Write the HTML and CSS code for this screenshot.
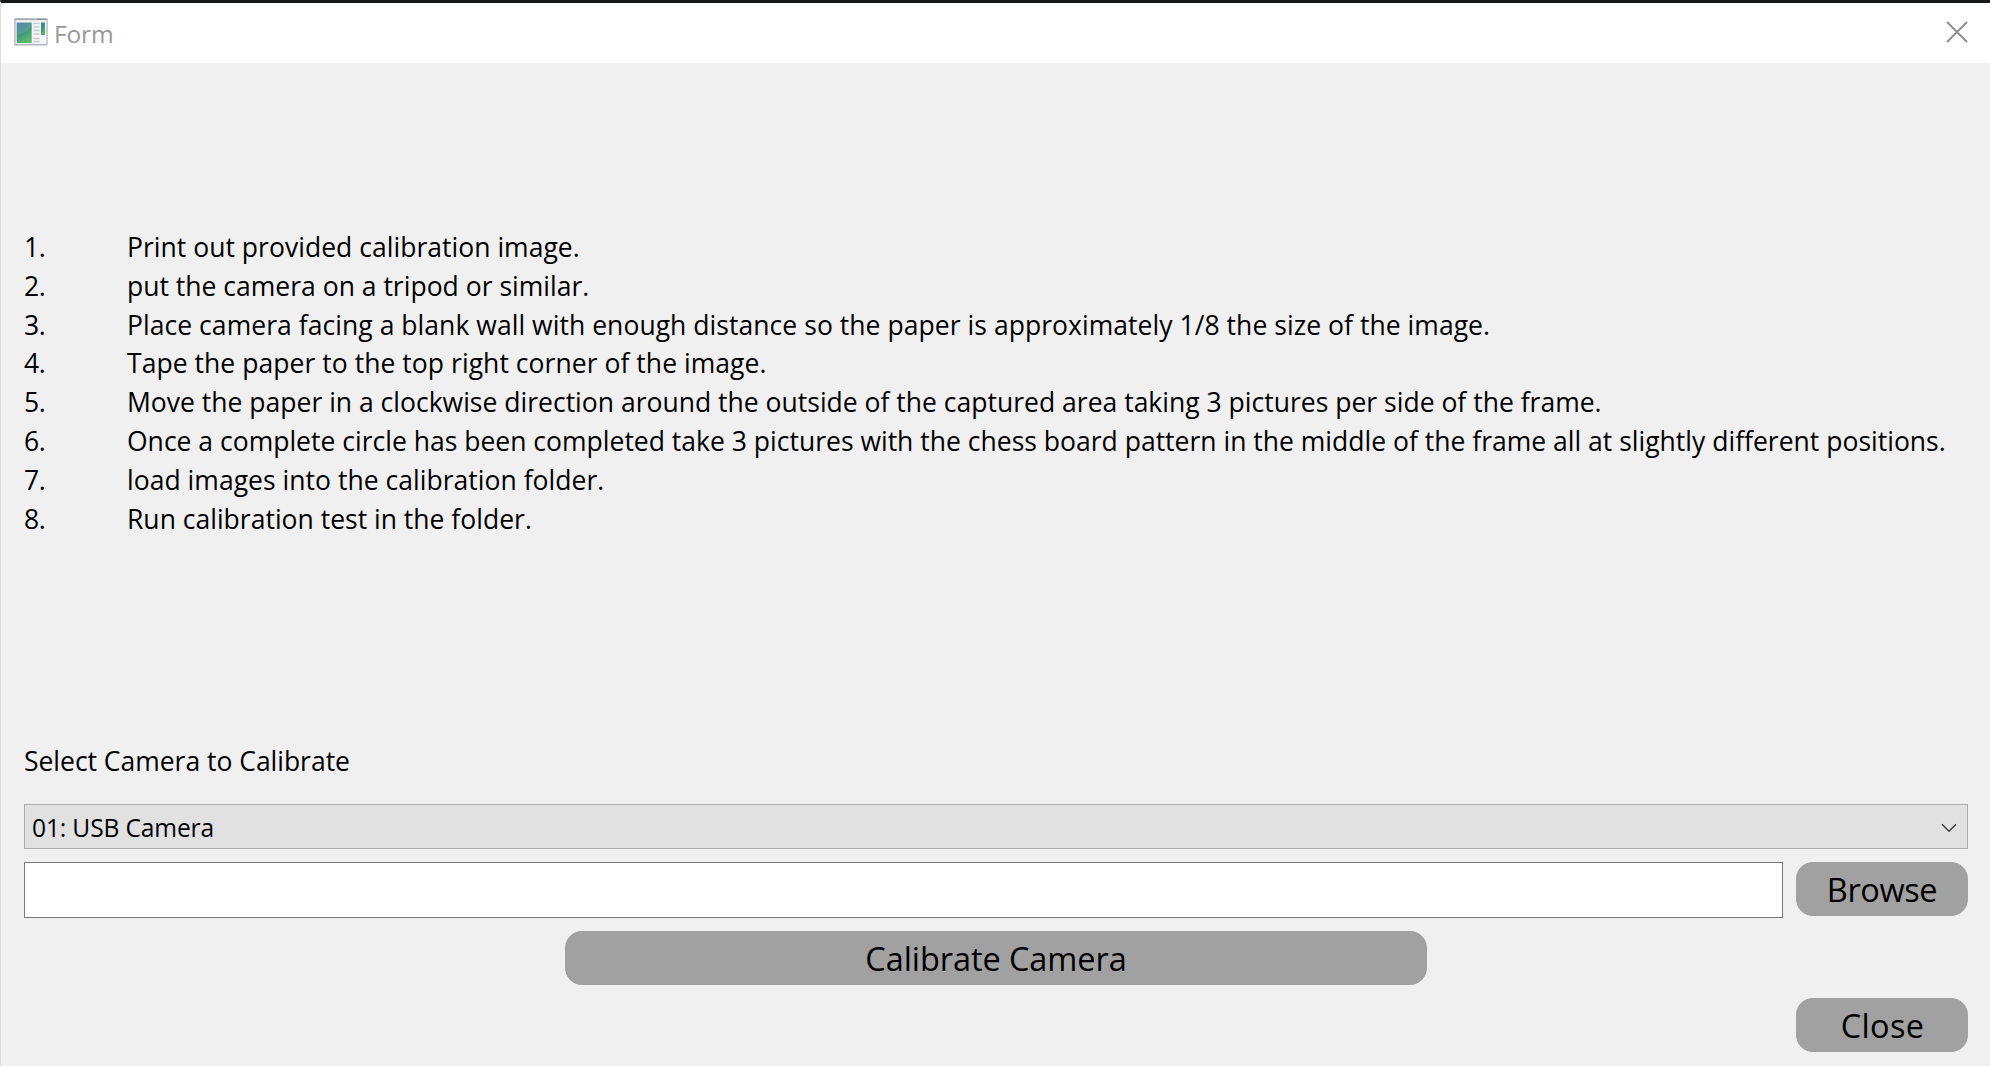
FILE: index.html
```html
<!DOCTYPE html>
<html lang="en">
<head>
<meta charset="utf-8">
<title>Form</title>
<link rel="stylesheet" href="styles.css">
</head>
<body>
<div class="window">
  <header class="titlebar">
    <svg class="app-icon" width="34" height="28" viewBox="0 0 34 28">
      <defs>
        <linearGradient id="screen" x1="0" y1="0" x2="0.5" y2="1">
          <stop offset="0" stop-color="#4b78a8"/>
          <stop offset="0.5" stop-color="#3f9187"/>
          <stop offset="1" stop-color="#5cba68"/>
        </linearGradient>
        <linearGradient id="frame" x1="0" y1="0" x2="1" y2="1">
          <stop offset="0" stop-color="#a3a7ad"/>
          <stop offset="1" stop-color="#b5b8bd"/>
        </linearGradient>
      </defs>
      <rect x="0.3" y="0.3" width="33.4" height="27.2" rx="1" fill="url(#frame)"/>
      <rect x="1.5" y="2.2" width="31" height="23.8" fill="#f4f5f7"/>
      <path d="M23 1.3h9" stroke="#858b93" stroke-width="1"/>
      <rect x="2.7" y="4.5" width="15" height="20.5" fill="url(#screen)"/>
      <path d="M2.7 17C9 16 14 13 17.7 8V4.5H2.7Z" fill="#fff" opacity=".1"/>
      <path d="M19.5 5.500h6M19.500 9h6M19.500 12.500h6M19.500 16h6M19.500 20.500h6M19.500 23.500h6" stroke="#c9ccd1" stroke-width="1.3"/>
      <rect x="27" y="4.5" width="4" height="12.5" fill="url(#screen)"/>
    </svg>
    <span class="title">Form</span>
    <svg class="close-icon" width="22" height="22" viewBox="0 0 22 22">
      <path d="M1 1L21 21M21 1L1 21" stroke="#8e8e8e" stroke-width="1.9" fill="none"/>
    </svg>
  </header>
  <main class="content">
    <ol class="steps">
      <li><span class="num">1.</span><span class="s1">Print out provided calibration image.</span></li>
      <li><span class="num">2.</span><span class="s2">put the camera on a tripod or similar.</span></li>
      <li><span class="num">3.</span><span class="s3">Place camera facing a blank wall with enough distance so the paper is approximately 1/8 the size of the image.</span></li>
      <li><span class="num">4.</span><span class="s3">Tape the paper to the top right corner of the image.</span></li>
      <li><span class="num">5.</span><span class="s2">Move the paper in a clockwise direction around the outside of the captured area taking 3 pictures per side of the frame.</span></li>
      <li><span class="num">6.</span><span class="s2">Once a complete circle has been completed take 3 pictures with the chess board pattern in the middle of the frame all at slightly different positions.</span></li>
      <li><span class="num">7.</span><span class="s1">load images into the calibration folder.</span></li>
      <li><span class="num">8.</span><span class="s2">Run calibration test in the folder.</span></li>
    </ol>
    <div class="label">Select Camera to Calibrate</div>
    <div class="combo">
      <span>01: USB Camera</span>
      <svg width="16" height="10" viewBox="0 0 16 10"><path d="M1 1.2L8 8.2L15 1.2" stroke="#444" stroke-width="1.6" fill="none"/></svg>
    </div>
    <div class="file-row">
      <input class="path" type="text" aria-label="Path">
      <button class="btn browse">Browse</button>
    </div>
    <button class="btn calibrate">Calibrate Camera</button>
    <button class="btn close">Close</button>
  </main>
</div>
</body>
</html>
```
FILE: styles.css
```css
* { box-sizing: border-box; }
body {
  margin: 0;
  background: #f0f0f0;
  color: #000;
  font-family: "Open Sans", "Noto Sans", sans-serif;
  font-size: 26.5px;
}
.window {
  width: 1990px;
  height: 1066px;
  border-top: 3px solid #141a18;
  border-left: 1px solid #dcdcdc;
  overflow: hidden;
}
.titlebar {
  display: flex;
  align-items: center;
  height: 60px;
  padding: 0 22px 0 13px;
  background: #fff;
}
.app-icon { margin-bottom: 3px; }
.title {
  flex: 1;
  margin: 2px 0 0 6px;
  font-size: 24.5px;
  line-height: 34px;
  letter-spacing: -0.15px;
  color: #999;
}
.close-icon { margin-bottom: 2px; }
.content {
  display: flex;
  flex-direction: column;
  height: 1003px;
  padding: 165px 22px 0 23px;
}
.steps {
  margin: 0;
  padding: 0;
  list-style: none;
  line-height: 38.8px;
  white-space: nowrap;
}
.steps li { display: flex; height: 38.8px; }
.num { width: 103px; letter-spacing: -0.3px; }
.s1 { letter-spacing: 0.03px; }
.s2 { letter-spacing: 0.01px; }
.s3 { letter-spacing: 0.05px; }
.label {
  margin-top: 203px;
  height: 63px;
  line-height: 40px;
  letter-spacing: -0.02px;
}
.combo {
  display: flex;
  align-items: center;
  justify-content: space-between;
  height: 45px;
  padding: 2px 10px 0 7px;
  border: 1px solid #adadad;
  background: #e1e1e1;
  font-size: 24.6px;
  letter-spacing: -0.15px;
}
.file-row {
  display: flex;
  justify-content: space-between;
  height: 56px;
  margin-top: 13px;
}
.path {
  width: 1759px;
  height: 56px;
  border: 1px solid #7a7a7a;
  background: #fff;
}
.btn {
  height: 54px;
  padding: 2px 0 0;
  border: 0;
  border-radius: 17px;
  background: #a1a1a1;
  color: #000;
  font-family: inherit;
  font-size: 32.5px;
  line-height: 52px;
}
.browse { width: 172px; letter-spacing: -0.4px; }
.calibrate { align-self: center; width: 862px; margin-top: 13px; letter-spacing: -0.08px; }
.close { align-self: flex-end; width: 172px; margin-top: 13px; padding-left: 1px; letter-spacing: 0.3px; }
```
